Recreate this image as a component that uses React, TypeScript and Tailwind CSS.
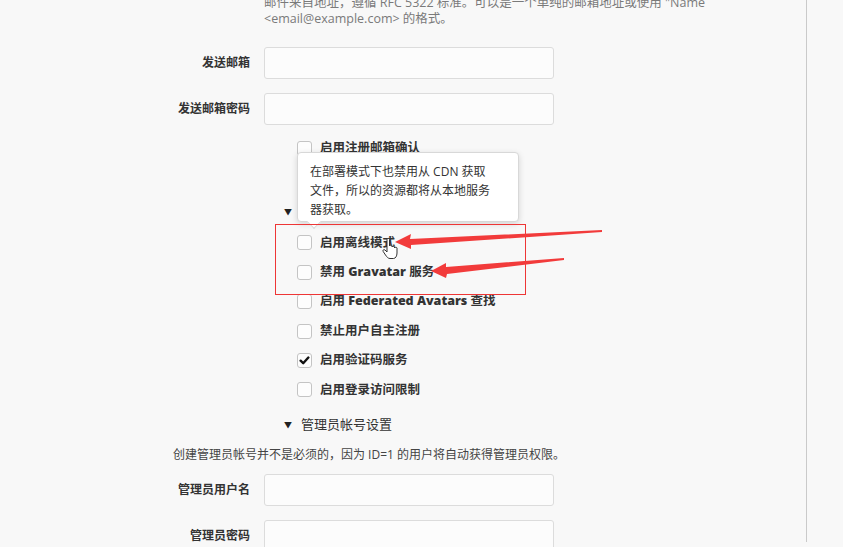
import React from 'react';

const font = { fontFamily: '"Open Sans", "Noto Sans CJK SC", sans-serif' };

const FieldRow = ({ label, className = '' }: { label: string; className?: string }) => (
    <div className={`flex items-center ${className}`}>
        <label className="w-[250px] text-right text-[12px] font-bold text-[#333]">{label}</label>
        <div className="ml-[14px] h-[32px] w-[290px] rounded-[3px] border border-[#dcdcdc] bg-[#fcfcfc]" />
    </div>
);

// rows under the tooltip keep their space but their text is covered in the screenshot
const CheckRow = ({ label, checked = false, covered = false }: { label: React.ReactNode; checked?: boolean; covered?: boolean }) => (
    <div className={`flex h-[29.4px] items-center pl-[297px] ${covered ? 'invisible' : ''}`}>
        <span className="flex h-[15px] w-[15px] items-center justify-center rounded-[3px] border border-[#c4c4c4] bg-[#fdfdfd]">
            {checked && (
                <svg width="11" height="11" viewBox="0 0 12 12">
                    <path d="M1.8 6.2 L4.6 9 L10.2 2.8" fill="none" stroke="#111" strokeWidth="2.6" strokeLinecap="round" strokeLinejoin="round" />
                </svg>
            )}
        </span>
        <span className="ml-[8px] text-[12.5px] font-semibold text-[#333]">{label}</span>
    </div>
);

const SectionHeader = ({ title, covered = false }: { title: string; covered?: boolean }) => (
    <div className="flex h-[36px] items-center pt-[4px] pl-[284px]">
        <span className="text-[8px] leading-none text-[#222]">▼</span>
        <span className={`ml-[9px] text-[13px] text-[#333] ${covered ? 'invisible' : ''}`}>{title}</span>
    </div>
);

export default function App() {
    return (
        <div className="relative h-[547px] w-[843px] overflow-hidden bg-[#f8f8f8]" style={font}>
            <div className="h-full w-[807px] border-r border-[#cacaca]">
                {/* description of the mail from field */}
                <p className="-mt-[5px] ml-[264px] w-[480px] text-[12.5px] leading-[16px] text-[#7a7a7a]">
                    邮件来自地址，遵循 RFC 5322 标准。可以是一个单纯的邮箱地址或使用 "Name
                    <br />
                    &lt;email@example.com&gt; 的格式。
                </p>

                <FieldRow label="发送邮箱" className="mt-[20px]" />
                <FieldRow label="发送邮箱密码" className="mt-[14px]" />

                <div className="mt-[8.5px]">
                    <CheckRow label="启用注册邮箱确认" />
                    <CheckRow label="启用邮件通知提醒" covered />
                    <SectionHeader title="服务器和第三方服务设置" covered />
                    <CheckRow label="启用离线模式" />
                    <CheckRow label={<>禁用 <b>Gravatar</b> 服务</>} />
                    <CheckRow label={<>启用 <b>Federated Avatars</b> 查找</>} />
                    <CheckRow label="禁止用户自主注册" />
                    <CheckRow label="启用验证码服务" checked />
                    <CheckRow label="启用登录访问限制" />
                    <SectionHeader title="管理员帐号设置" />
                </div>

                <div className="flex h-[28px] items-center pl-[173px] text-[12px] text-[#444]">
                    创建管理员帐号并不是必须的，因为 ID=1 的用户将自动获得管理员权限。
                </div>

                <FieldRow label="管理员用户名" className="mt-[5px]" />
                <FieldRow label="管理员密码" className="mt-[14px]" />
            </div>

            {/* tooltip */}
            <div className="absolute left-[297px] top-[152px] h-[70px] w-[222px] rounded-[4px] border border-[#d8d8d8] bg-white px-[12px] pt-[9px] text-[12px] leading-[19px] text-[#333] shadow-[0_2px_6px_rgba(0,0,0,0.15)]">
                在部署模式下也禁用从 CDN 获取
                <br />
                文件，所以的资源都将从本地服务
                <br />
                器获取。
                <div className="absolute -bottom-[6px] left-[11px] h-[10px] w-[10px] rotate-45 border-b border-r border-[#d8d8d8] bg-white" />
            </div>

            {/* red highlight box */}
            <div className="pointer-events-none absolute left-[275px] top-[224px] h-[71px] w-[251px] border border-[#ee3636]" />

            {/* annotation arrows + cursor */}
            <svg className="pointer-events-none absolute left-0 top-0" width="843" height="547">
                <polygon
                    points="395,242 411,234 410,239 602,230 602,232 411,245 411,249"
                    fill="#f23b3b"
                />
                <polygon
                    points="431,271 446,263 446,267 564,258 564,260 447,274 446,278"
                    fill="#f23b3b"
                />
                <g transform="translate(382,237)">
                    <path
                        d="M5 2.5 C5 1 7.5 1 7.5 2.5 L7.5 9 C7.5 8 10 8 10 9 L10 10 C10 9 12.5 9 12.5 10 L12.5 11 C12.5 10 15 10 15 11 L15 16 C15 19 13.5 21.5 11.5 21.5 L8 21.5 C6 21.5 5 20 3.5 18 L1.2 14.5 C0.4 13.2 1.8 12 3 13 L5 15 Z"
                        fill="#fff"
                        stroke="#333"
                        strokeWidth="1"
                        strokeLinejoin="round"
                    />
                </g>
            </svg>
        </div>
    );
}
